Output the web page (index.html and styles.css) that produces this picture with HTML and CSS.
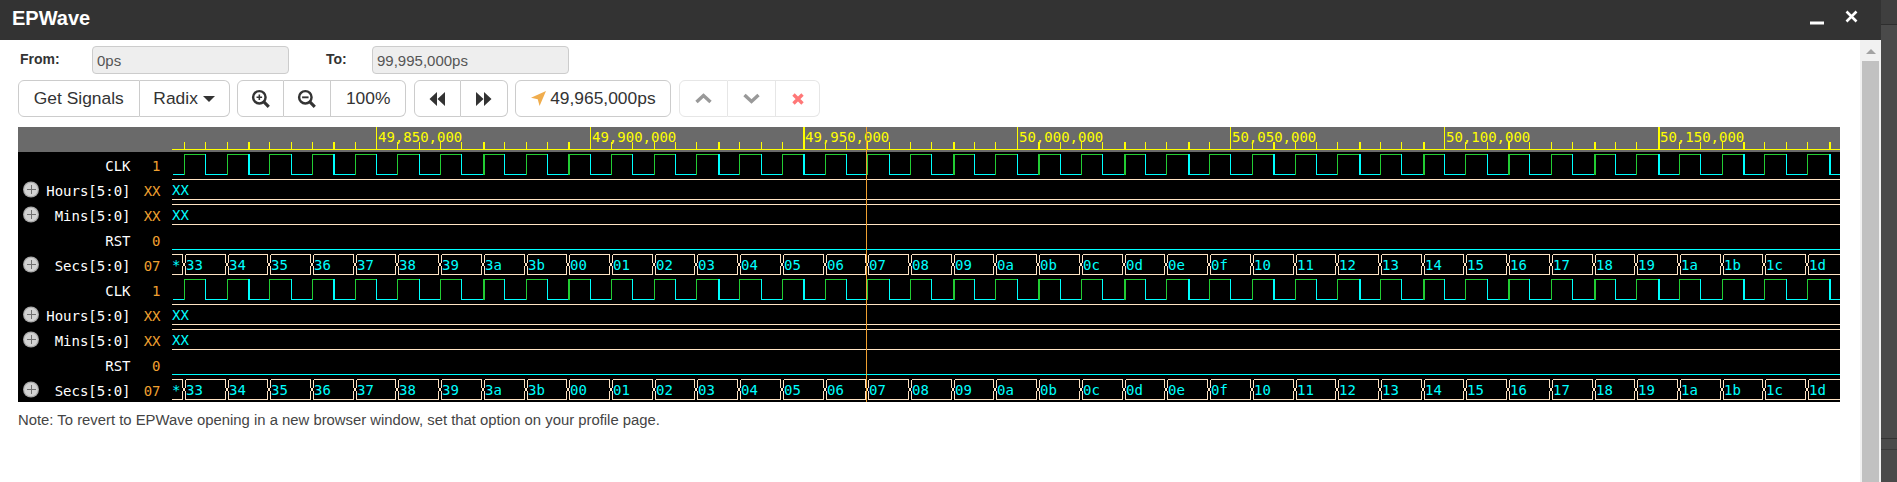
FILE: index.html
```html
<!DOCTYPE html>
<html lang="en">
<head>
    <meta charset="UTF-8">
    <title>EPWave</title>
    <link rel="stylesheet" href="styles.css">
</head>
<body>
    <div class="window">
        <!-- title bar -->
        <header class="titlebar">
            <span class="title">EPWave</span>
            <div class="title-icons">
                <svg class="ico-min" width="14" height="4" viewBox="0 0 14 4"><rect width="14" height="3" y="0.5" fill="#fff"/></svg>
                <svg class="ico-close" width="13" height="13" viewBox="0 0 13 13"><path d="M1.5 1.5 L11.5 11.5 M11.5 1.5 L1.5 11.5" stroke="#fff" stroke-width="2.6"/></svg>
            </div>
        </header>

        <div class="frame">
            <main class="content">
                <!-- time range -->
                <div class="range">
                    <label class="range-from">From:</label>
                    <input class="range-input" type="text" value="0ps" disabled>
                    <label class="range-to">To:</label>
                    <input class="range-input" type="text" value="99,995,000ps" disabled>
                </div>

                <!-- toolbar -->
                <div class="toolbar">
                    <div class="btn-group">
                        <button class="btn btn-signals">Get Signals</button>
                        <button class="btn btn-radix">Radix<span class="caret"></span></button>
                    </div>
                    <div class="btn-group">
                        <button class="btn btn-icon">
                            <svg width="20" height="20" viewBox="0 0 18 18"><circle cx="7.5" cy="7.5" r="5.6" fill="none" stroke="#333" stroke-width="2.2"/><path d="M11.6 11.6 L16 16" stroke="#333" stroke-width="2.8"/><path d="M5 7.5 H10 M7.5 5 V10" stroke="#333" stroke-width="1.4"/></svg>
                        </button>
                        <button class="btn btn-icon">
                            <svg width="20" height="20" viewBox="0 0 18 18"><circle cx="7.5" cy="7.5" r="5.6" fill="none" stroke="#333" stroke-width="2.2"/><path d="M11.6 11.6 L16 16" stroke="#333" stroke-width="2.8"/><path d="M4.6 7.5 H10.4" stroke="#333" stroke-width="1.7"/></svg>
                        </button>
                        <button class="btn btn-zoom">100%</button>
                    </div>
                    <div class="btn-group">
                        <button class="btn btn-icon">
                            <svg width="16" height="14" viewBox="0 0 16 14"><path d="M8 0 V14 L0.5 7 Z M16 0 V14 L8.5 7 Z" fill="#333"/></svg>
                        </button>
                        <button class="btn btn-icon">
                            <svg width="16" height="14" viewBox="0 0 16 14"><path d="M0 0 V14 L7.5 7 Z M8 0 V14 L15.5 7 Z" fill="#333"/></svg>
                        </button>
                    </div>
                    <div class="btn-group">
                        <button class="btn btn-cursor">
                            <svg width="15" height="15" viewBox="0 0 14 14"><path d="M14 0 L8 14 L6.3 7.7 L0 6.2 Z" fill="#f0ad4e"/></svg>
                            49,965,000ps
                        </button>
                    </div>
                    <div class="btn-group btn-group-off">
                        <button class="btn btn-step">
                            <svg width="17" height="11" viewBox="0 0 17 11"><path d="M1.5 9 L8.5 2.5 L15.5 9" fill="none" stroke="#999" stroke-width="3.4"/></svg>
                        </button>
                        <button class="btn btn-step">
                            <svg width="17" height="11" viewBox="0 0 17 11"><path d="M1.5 2 L8.5 8.5 L15.5 2" fill="none" stroke="#999" stroke-width="3.4"/></svg>
                        </button>
                        <button class="btn btn-clear">
                            <svg width="12" height="12" viewBox="0 0 12 12"><path d="M1.5 1.5 L10.5 10.5 M10.5 1.5 L1.5 10.5" stroke="#f77" stroke-width="3.4"/></svg>
                        </button>
                    </div>
                </div>

                <!-- waveform, drawn by wave.js -->
                <svg id="wave" class="wave" width="1822" height="275" viewBox="18 127 1822 275"></svg>

                <p class="note">Note: To revert to EPWave opening in a new browser window, set that option on your profile page.</p>
            </main>

            <div class="scrollbar">
                <span class="scroll-up"></span>
                <div class="scroll-thumb"></div>
            </div>
        </div>
    </div>

    <div class="side">
        <div class="side-top"></div>
        <div class="side-mid"></div>
        <div class="side-low"></div>
    </div>

    <script src="wave.js"></script>
</body>
</html>
```

FILE: styles.css
```css
* {
    margin: 0;
    padding: 0;
    box-sizing: border-box;
}

body {
    display: flex;
    width: 1897px;
    height: 482px;
    overflow: hidden;
    background: #fff;
    color: #333;
    font-family: "Liberation Sans", Arial, sans-serif;
}

.window {
    display: flex;
    flex-direction: column;
    width: 1881px;
}

/* title bar */
.titlebar {
    display: flex;
    justify-content: space-between;
    height: 40px;
    background: #333;
    color: #fff;
    flex-shrink: 0;
}

.title {
    margin-left: 12px;
    font-size: 20px;
    font-weight: 700;
    line-height: 36px;
}

.title-icons {
    display: flex;
    align-items: flex-start;
    gap: 21px;
    margin-right: 23px;
}

.ico-min {
    margin-top: 21px;
}

.ico-close {
    margin-top: 10px;
}

.frame {
    display: flex;
    flex: 1;
    min-height: 0;
}

.content {
    width: 1860px;
    padding: 6px 20px 0 18px;
}

/* from / to */
.range {
    display: flex;
    align-items: center;
    height: 28px;
    font-size: 14px;
    font-weight: 700;
}

.range-from {
    width: 74px;
    margin-bottom: 3px;
    padding-left: 2px;
}

.range-to {
    width: 46px;
    margin-left: 37px;
    margin-bottom: 3px;
}

.range-input {
    width: 197px;
    height: 28px;
    padding: 0 4px;
    border: 1px solid #ccc;
    border-radius: 4px;
    background: #eee;
    color: #555;
    font-family: inherit;
    font-size: 15px;
}

/* toolbar */
.toolbar {
    display: flex;
    gap: 7.6px;
    margin-top: 6px;
}

.btn-group {
    display: flex;
}

.btn {
    display: flex;
    align-items: center;
    justify-content: center;
    height: 37px;
    border: 1px solid #ccc;
    border-left-width: 0;
    background: #fff;
    color: #333;
    font-family: inherit;
    font-size: 17.4px;
}

.btn:first-child {
    border-left-width: 1px;
    border-radius: 6px 0 0 6px;
}

.btn:last-child {
    border-radius: 0 6px 6px 0;
}

.btn-signals {
    width: 121.6px;
}

.btn-radix {
    width: 90px;
}

.caret {
    margin-left: 5px;
    border-top: 6px solid #333;
    border-left: 6.5px solid transparent;
    border-right: 6.5px solid transparent;
}

.btn-icon {
    width: 47px;
}

.btn-zoom {
    width: 75px;
}

.btn-cursor {
    gap: 4px;
    width: 156px;
    border-radius: 6px !important;
}

.btn-group-off .btn {
    border-color: #e6e6e6;
}

.btn-step {
    width: 48.6px;
}

.btn-clear {
    width: 44px;
}

/* waveform */
.wave {
    display: block;
    margin-top: 10px;
}

.wave text {
    font-family: "DejaVu Sans Mono", monospace;
    font-size: 14px;
}

.note {
    margin-top: 10px;
    color: #444;
    font-size: 14.85px;
    line-height: 17px;
}

/* scrollbar */
.scrollbar {
    position: relative;
    width: 21px;
    padding: 21px 2px 0;
    background: #f1f1f1;
}

.scroll-up {
    position: absolute;
    top: 9px;
    left: 6px;
    border-bottom: 5px solid #a3a3a3;
    border-left: 5px solid transparent;
    border-right: 5px solid transparent;
}

.scroll-thumb {
    height: 100%;
    background: #c1c1c1;
}

/* browser area right of the window */
.side {
    display: flex;
    flex-direction: column;
    width: 16px;
    background: #4a4a4a;
}

.side-top {
    height: 25px;
    border-bottom: 1px solid #2e2e2e;
    background: #3f3f3f;
}

.side-mid {
    height: 414px;
    border-bottom: 1px solid #333;
}

.side-low {
    height: 11px;
    border-bottom: 1px solid #3a3a3a;
}
```

FILE: wave.js
```js
// EPWave waveform view
const svg = document.getElementById('wave');
const NS = 'http://www.w3.org/2000/svg';

const LEFT = 18, RIGHT = 1840, TOP = 127, BOTTOM = 402;
const X0 = 184.3;     // first tick
const STEP = 21.36;   // 5,000ps
const CYAN = '#00ffff', GREEN = '#22cc33', BUS = '#ffe4c4', YELLOW = '#ffff00', ORANGE = '#f0a030';

// edges that landed on two pixels in the original canvas
const THICK = [3, 7, 14, 18, 25, 29, 36, 40, 44, 47, 51, 55, 58, 62, 66, 69, 73, 77];

function add(tag, attrs, text) {
    const el = document.createElementNS(NS, tag);
    for (const k in attrs) el.setAttribute(k, attrs[k]);
    if (text) el.textContent = text;
    svg.appendChild(el);
    return el;
}

function rect(x, y, w, h, fill) {
    add('rect', { x: x, y: y, width: w, height: h, fill: fill, 'shape-rendering': 'crispEdges' });
}

function label(x, y, str, fill, anchor) {
    add('text', { x: x, y: y, fill: fill, 'text-anchor': anchor || 'start' }, str);
}

function tickX(n) {
    return Math.floor(X0 + n * STEP);
}

function edgeW(n) {
    return THICK.includes(n) ? 2 : 1;
}

function drawRuler() {
    rect(LEFT, TOP, RIGHT - LEFT, 25, '#6a6a6a');
    rect(172, 149, RIGHT - 172, 1, YELLOW);
    let value = 49850;
    for (let n = 0; n <= 77; n++) {
        const x = tickX(n);
        const major = (n - 9) % 10 === 0;
        rect(x, major ? TOP : 142, edgeW(n), major ? 22 : 7, YELLOW);
        if (major) {
            label(x + 2, 142, value.toLocaleString('en-US') + ',000', YELLOW);
            value += 50;
        }
    }
}

function drawClock(y) {
    const high = y, low = y + 20;
    rect(173, low, tickX(0) - 173, 1, CYAN);
    for (let n = 0; n <= 77; n += 2) {
        const rise = tickX(n), fall = tickX(n + 1), next = tickX(n + 2);
        rect(rise, high, edgeW(n), 21, GREEN);
        rect(rise, high, Math.min(fall, RIGHT) - rise, 1, GREEN);
        if (fall < RIGHT) {
            rect(fall, high, edgeW(n + 1), 21, CYAN);
            rect(fall + 1, low, Math.min(next, RIGHT) - fall - 1, 1, CYAN);
        }
    }
}

function drawFlat(y) {
    rect(172, y, RIGHT - 172, 1, BUS);
    rect(172, y + 20, RIGHT - 172, 1, BUS);
    label(172, y + 16, 'XX', CYAN);
}

// left end of a bus cell, top to bottom
function leftEnd(a, y) {
    return 'V' + (y + 13) + 'L' + (a + .5) + ' ' + (y + 10.5) + 'L' + (a + 1.5) + ' ' + (y + 8) + 'V' + (y + .5);
}

// right end of a bus cell, top to bottom
function rightEnd(b, y) {
    return 'V' + (y + 8) + 'L' + (b - .5) + ' ' + (y + 10.5) + 'L' + (b - 1.5) + ' ' + (y + 13) + 'V' + (y + 20.5);
}

function busLine(d) {
    add('path', { d: d, fill: 'none', stroke: BUS, 'shape-rendering': 'crispEdges' });
}

function drawSecs(y) {
    // stub before the first transition, shows *
    const first = tickX(0);
    busLine('M172 ' + (y + .5) + 'H' + (first - 1.5) + rightEnd(first, y) + 'H172');
    label(172, y + 16, '*', CYAN);
    let val = 0x33;
    for (let n = 0; n <= 76; n += 2) {
        const a = tickX(n), b = Math.min(tickX(n + 2), RIGHT + 2);
        let d = 'M' + (a + 1.5) + ' ' + (y + .5) + 'H' + (b - 1.5);
        d += b > RIGHT ? 'M' + (b - 1.5) + ' ' + (y + 20.5) : rightEnd(b, y);
        d += 'H' + (a + 1.5) + leftEnd(a, y);
        busLine(d);
        label(a + 2, y + 16, val.toString(16).padStart(2, '0'), CYAN);
        val = val === 0x3b ? 0 : val + 1;
    }
}

function drawPlus(cy) {
    add('circle', { cx: 31, cy: cy, r: 8, fill: '#a8a8a8' });
    add('circle', { cx: 31, cy: cy, r: 6.8, fill: '#d2d2d2' });
    rect(27, Math.floor(cy), 9, 1, '#707070');
    rect(31, Math.floor(cy) - 4, 1, 9, '#707070');
}

const rows = [
    { name: 'CLK', val: '1', kind: 'clock' },
    { name: 'Hours[5:0]', val: 'XX', kind: 'flat' },
    { name: 'Mins[5:0]', val: 'XX', kind: 'flat' },
    { name: 'RST', val: '0', kind: 'low' },
    { name: 'Secs[5:0]', val: '07', kind: 'secs' },
    { name: 'CLK', val: '1', kind: 'clock' },
    { name: 'Hours[5:0]', val: 'XX', kind: 'flat' },
    { name: 'Mins[5:0]', val: 'XX', kind: 'flat' },
    { name: 'RST', val: '0', kind: 'low' },
    { name: 'Secs[5:0]', val: '07', kind: 'secs' }
];

rect(LEFT, TOP, RIGHT - LEFT, BOTTOM - TOP, '#000');
drawRuler();

rows.forEach((row, i) => {
    const y = 154 + i * 25;
    label(130.5, y + 17, row.name, '#fff', 'end');
    label(160.5, y + 17, row.val, ORANGE, 'end');
    if (row.kind !== 'clock' && row.kind !== 'low') drawPlus(y + 10.5);
    if (row.kind === 'clock') drawClock(y);
    if (row.kind === 'flat') drawFlat(y);
    if (row.kind === 'low') rect(172, y + 20, RIGHT - 172, 1, CYAN);
    if (row.kind === 'secs') drawSecs(y);
});

// cursor at 49,965,000ps
rect(866, TOP, 1, BOTTOM - TOP, ORANGE);
```
